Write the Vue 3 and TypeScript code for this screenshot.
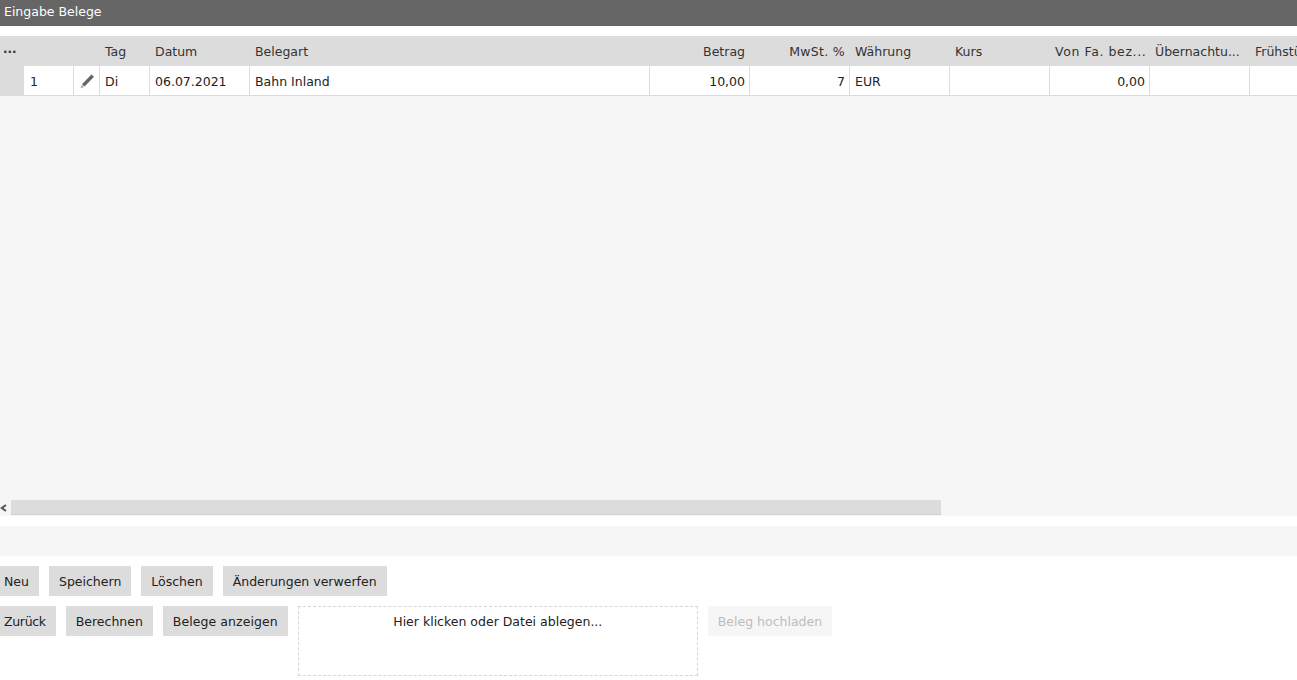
<script setup lang="ts">
interface Col { label: string; value: string; right?: boolean; cls: string }
const cols: Col[] = [
  { label: '', value: '', cls: 'w24' },
  { label: '', value: '1', cls: 'w50 nr' },
  { label: '', value: '', cls: 'w26 pen' },
  { label: 'Tag', value: 'Di', cls: 'w50' },
  { label: 'Datum', value: '06.07.2021', cls: 'w100' },
  { label: 'Belegart', value: 'Bahn Inland', cls: 'w400' },
  { label: 'Betrag', value: '10,00', right: true, cls: 'w100' },
  { label: 'MwSt. %', value: '7', right: true, cls: 'w100 mwst' },
  { label: 'Währung', value: 'EUR', cls: 'w100' },
  { label: 'Kurs', value: '', cls: 'w100' },
  { label: 'Von Fa. bez...', value: '0,00', right: true, cls: 'w100 wide' },
  { label: 'Übernachtu...', value: '', cls: 'w100' },
  { label: 'Frühstück', value: '', cls: 'w100' },
]
const row1 = ['Neu', 'Speichern', 'Löschen', 'Änderungen verwerfen']
const row2 = ['Zurück', 'Berechnen', 'Belege anzeigen']
</script>

<template>
  <div class="page">
    <header class="title">Eingabe Belege</header>
    <section class="grid">
      <div class="head">
        <div v-for="(c, i) in cols" :key="i" class="hcell" :class="[c.cls, { right: c.right }]">
          <span v-if="i === 0" class="dots">...</span>
          <template v-else>{{ c.label }}</template>
        </div>
      </div>
      <div class="row">
        <div v-for="(c, i) in cols" :key="i" class="cell" :class="[c.cls, { right: c.right, gutter: i === 0 }]">
          <svg v-if="i === 2" class="pencil" width="16" height="16" viewBox="0 0 16 16">
            <path d="M12.4 1.4l2.6 2.4L5.6 13.6 3 11.2z" fill="#666" />
            <path d="M2.7 11.8l2.4 2.3-3.5 1.1z" fill="#a5a5a5" />
          </svg>
          <template v-else>{{ c.value }}</template>
        </div>
      </div>
      <div class="body"></div>
      <div class="scroll">
        <span class="arrow">
          <svg width="8" height="8" viewBox="0 0 8 8"><path d="M6 1L1.8 4 6 7" fill="none" stroke="#555" stroke-width="2" /></svg>
        </span>
        <span class="thumb"></span>
      </div>
    </section>
    <div class="status"></div>
    <div class="btnrow">
      <button v-for="b in row1" :key="b" class="btn">{{ b }}</button>
    </div>
    <div class="btnrow second">
      <button v-for="b in row2" :key="b" class="btn">{{ b }}</button>
      <div class="drop">Hier klicken oder Datei ablegen...</div>
      <button class="btn disabled">Beleg hochladen</button>
    </div>
  </div>
</template>

<style>
html, body { margin: 0; background: #fff; overflow: hidden; }
</style>

<style scoped>
.page {
  width: 1297px;
  height: 680px;
  overflow: hidden;
  font-family: "DejaVu Sans", Verdana, sans-serif;
  font-size: 12.5px;
  color: #222;
  background: #fff;
}
.title {
  height: 26px;
  line-height: 24px;
  padding-left: 4px;
  background: #666;
  color: #fff;
  box-sizing: border-box;
}
.grid { margin-top: 10px; background: #f6f6f6; height: 480px; display: flex; flex-direction: column; overflow: hidden; }
.head { display: flex; height: 30px; background: #dcdcdc; flex: none; }
.row { display: flex; height: 30px; flex: none; }
.hcell, .cell {
  flex: none;
  box-sizing: border-box;
  padding: 0 5px;
  white-space: nowrap;
  overflow: hidden;
}
.hcell { line-height: 31px; color: #333; }
.hcell.wide { letter-spacing: 0.6px; }
.hcell.mwst { letter-spacing: 0.3px; }
.cell { line-height: 31px; background: #fff; border-right: 1px solid #dcdcdc; border-bottom: 1px solid #dcdcdc; }
.cell.right { padding-right: 4px; }
.cell.nr { padding-left: 6px; }
.cell.gutter { background: #dcdcdc; border: 0; }
.right { text-align: right; }
.w24 { width: 24px; }
.w26 { width: 26px; }
.w50 { width: 50px; }
.w100 { width: 100px; }
.w400 { width: 400px; }
.hcell.w24 { padding: 0 0 0 3px; overflow: visible; }
.dots { font-weight: 700; font-size: 12px; position: relative; top: -3px; }
.pen { display: flex; align-items: center; justify-content: center; padding: 0; }
.body { flex: 1; }
.scroll { display: flex; height: 15px; margin-bottom: 1px; flex: none; }
.arrow { width: 11px; display: flex; align-items: center; justify-content: flex-start; flex: none; }
.thumb { width: 930px; background: #dcdcdc; border-bottom: 1px solid #d2d2d2; box-sizing: border-box; }
.status { margin-top: 10px; height: 30px; background: #f6f6f6; }
.btnrow { display: flex; gap: 10px; margin-top: 10px; align-items: flex-start; }
.btn {
  height: 30px;
  padding: 1px 10px 0;
  border: 0;
  background: #dcdcdc;
  color: #222;
  font: inherit;
}
.btnrow .btn:first-child { padding-left: 4px; }
.second .btn:first-child { letter-spacing: -0.33px; }
.second .btn:nth-child(3) { letter-spacing: 0.07px; }
.drop {
  width: 400px;
  height: 70px;
  box-sizing: border-box;
  border: 1px dashed #d6d6d6;
  text-align: center;
  padding-top: 7px;
}
.btn.disabled { background: #f6f6f6; color: #bdbdbd; }
</style>
